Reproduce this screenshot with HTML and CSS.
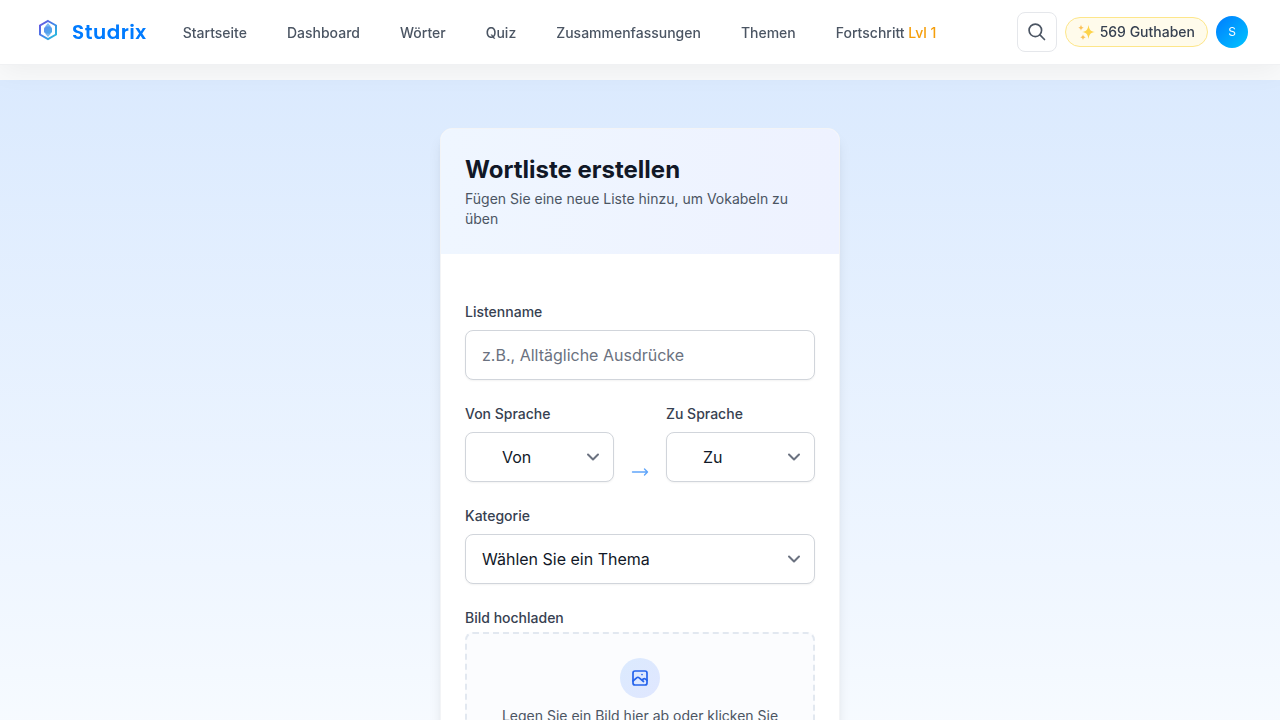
FILE: index.html
```html
<!DOCTYPE html>
<html lang="de">
<head>
    <meta charset="UTF-8">
    <meta name="viewport" content="width=device-width, initial-scale=1">
    <title>Wortliste erstellen</title>
    <link rel="stylesheet" href="styles.css">
</head>
<body>
    <header class="navbar">
        <a href="#" class="logo">
            <svg class="logo-icon" viewBox="0 0 32 32" fill="none">
                <defs>
                    <linearGradient id="logoStroke" x1="0" y1="0" x2="1" y2="1">
                        <stop offset="0" stop-color="#6a4fe0"/>
                        <stop offset="0.5" stop-color="#4285e8"/>
                        <stop offset="1" stop-color="#22c5dc"/>
                    </linearGradient>
                    <linearGradient id="logoFill" x1="0" y1="0" x2="1" y2="1">
                        <stop offset="0" stop-color="#5c8cf0"/>
                        <stop offset="1" stop-color="#4cb0e8"/>
                    </linearGradient>
                </defs>
                <path d="M16 7l8 4.500v9l-8 4.500-8-4.500v-9z" stroke="url(#logoStroke)" stroke-width="2"/>
                <path d="M16 9l3 3.500h-6zM16 23l3-3.500h-6z" fill="#7db9f2"/>
                <rect x="12" y="13" width="8" height="6" rx="1.500" fill="url(#logoFill)"/>
                <path d="M13.500 12.500h5M13.500 19.500h5" stroke="#62a8ee"/>
            </svg>
            <span class="logo-text">Studrix</span>
        </a>
        <nav class="nav-links">
            <a href="#">Startseite</a>
            <a href="#">Dashboard</a>
            <a href="#">Wörter</a>
            <a href="#">Quiz</a>
            <a href="#">Zusammenfassungen</a>
            <a href="#">Themen</a>
            <a href="#">Fortschritt <span class="level">Lvl 1</span></a>
        </nav>
        <div class="nav-actions">
            <button type="button" class="search-btn" aria-label="Suche">
                <svg width="20" height="20" viewBox="0 0 24 24" fill="none" stroke="currentColor" stroke-width="2" stroke-linecap="round">
                    <circle cx="10" cy="10" r="7.500"/>
                    <path d="M15.500 15.500L21 21"/>
                </svg>
            </button>
            <a href="#" class="credits">
                <svg width="18" height="18" viewBox="0 0 18 18">
                    <path d="M10.500 2c.8 4.700 1.800 6.100 6.500 7-4.700.9-5.700 2.300-6.500 7-.8-4.700-1.800-6.100-6.500-7 4.700-.9 5.700-2.300 6.500-7z" fill="#fdd44b"/>
                    <path d="M3 1.500c.4 2.200.8 2.700 2.700 3.200-1.900.5-2.300 1-2.700 3.200-.4-2.200-.8-2.700-2.700-3.200 1.900-.5 2.300-1 2.700-3.200z" fill="#fbc158"/>
                    <path d="M5 11.200c.4 2 .9 2.500 2.700 3-1.800.5-2.300 1-2.700 3-.4-2-.9-2.500-2.700-3 1.800-.5 2.300-1 2.700-3z" fill="#fbc158"/>
                </svg>
                569 Guthaben
            </a>
            <button type="button" class="avatar">S</button>
        </div>
    </header>

    <main class="page">
        <form class="card">
            <div class="card-header">
                <h1>Wortliste erstellen</h1>
                <p>Fügen Sie eine neue Liste hinzu, um Vokabeln zu üben</p>
            </div>
            <div class="card-body">
                <div class="field">
                    <label for="listName">Listenname</label>
                    <input type="text" id="listName" class="control" placeholder="z.B., Alltägliche Ausdrücke">
                </div>

                <div class="languages">
                    <div class="field">
                        <label for="fromLang">Von Sprache</label>
                        <div class="select-wrap">
                            <select id="fromLang" class="control control-flag">
                                <option>Von</option>
                            </select>
                            <svg class="chevron" viewBox="0 0 20 20"><path d="M5 7.500l5 5 5-5"/></svg>
                        </div>
                    </div>
                    <svg class="arrow" width="20" height="20" viewBox="0 0 20 20">
                        <path d="M2.500 10h15M14.500 7l3 3-3 3"/>
                    </svg>
                    <div class="field">
                        <label for="toLang">Zu Sprache</label>
                        <div class="select-wrap">
                            <select id="toLang" class="control control-flag">
                                <option>Zu</option>
                            </select>
                            <svg class="chevron" viewBox="0 0 20 20"><path d="M5 7.500l5 5 5-5"/></svg>
                        </div>
                    </div>
                </div>

                <div class="field">
                    <label for="category">Kategorie</label>
                    <div class="select-wrap">
                        <select id="category" class="control">
                            <option>Wählen Sie ein Thema</option>
                        </select>
                        <svg class="chevron" viewBox="0 0 20 20"><path d="M5 7.500l5 5 5-5"/></svg>
                    </div>
                </div>

                <div class="upload">
                    <span class="upload-label" id="uploadLabel">Bild hochladen</span>
                    <button type="button" class="dropzone" aria-labelledby="uploadLabel">
                        <span class="upload-icon">
                            <svg width="20" height="20" viewBox="0 0 20 20" fill="none" stroke="currentColor" stroke-width="1.700" stroke-linecap="round" stroke-linejoin="round">
                                <rect x="3" y="3" width="14" height="14" rx="2"/>
                                <path d="M3 13l3.600-3.200a1.800 1.800 0 0 1 2.600 0l4.300 3.700M12 12l1.300-1a1.800 1.800 0 0 1 2.200.1l1.500 1.200"/>
                                <path d="M12 6.500h.01"/>
                            </svg>
                        </span>
                        <span>Legen Sie ein Bild hier ab oder klicken Sie</span>
                    </button>
                </div>
            </div>
        </form>
    </main>
</body>
</html>
```
FILE: styles.css
```css
* {
    box-sizing: border-box;
}
body {
    margin: 0;
    padding-top: 80px;
    font-family: Inter, sans-serif;
    font-size: 16px;
    line-height: 24px;
    color: #111827;
    background-color: #f9fafb;
}
a {
    color: inherit;
    text-decoration: none;
}
button, input, select {
    font: inherit;
    color: inherit;
    cursor: pointer;
}

/* Navigation */
.navbar {
    position: fixed;
    top: 0;
    left: 0;
    right: 0;
    z-index: 10;
    display: flex;
    align-items: center;
    height: 65px;
    padding: 0 32px;
    background-color: white;
    border-bottom: 1px solid #f0f1f3;
    box-shadow: 0 4px 30px rgba(0,0,0,0.06);
}
.logo {
    display: flex;
    align-items: center;
    gap: 8px;
    margin-right: 36px;
}
.logo-icon {
    width: 32px;
    height: 32px;
    margin-bottom: 4px;
}
.logo-text {
    font-family: Poppins, Inter, sans-serif;
    font-size: 20px;
    font-weight: 600;
    letter-spacing: 0.5px;
    color: #007bff;
}
.nav-links {
    display: flex;
    gap: 40px;
    padding-top: 2px;
    font-size: 14px;
    font-weight: 500;
    color: #4b5563;
    white-space: nowrap;
}
.level {
    color: #f59e0b;
}
.nav-actions {
    display: flex;
    align-items: center;
    gap: 8px;
    margin-left: auto;
}
.search-btn {
    display: flex;
    align-items: center;
    justify-content: center;
    width: 40px;
    height: 40px;
    padding: 0;
    color: #4b5563;
    background-color: white;
    border: 1px solid #e5e7eb;
    border-radius: 8px;
}
.credits {
    display: flex;
    align-items: center;
    gap: 4px;
    height: 30px;
    padding: 0 12px;
    font-size: 14px;
    font-weight: 500;
    color: #374151;
    white-space: nowrap;
    background-color: #fffbeb;
    border: 1px solid #fde68a;
    border-radius: 15px;
}
.avatar {
    width: 32px;
    height: 32px;
    padding: 0;
    font-size: 12px;
    color: white;
    background: linear-gradient(135deg, #007bff, #00c6ff);
    border: none;
    border-radius: 50%;
}

/* Form card */
.page {
    padding: 48px 16px 0;
    background: linear-gradient(#dbeafe, #eff6ff 70%, #f9fcff);
}
.card {
    max-width: 400px;
    margin: 0 auto;
    overflow: hidden;
    background-color: white;
    border: 1px solid #f3f4f6;
    border-radius: 12px 12px 0 0;
    box-shadow: 0 10px 15px -3px rgba(0,0,0,0.1), 0 4px 6px -4px rgba(0,0,0,0.1);
}
.card-header {
    padding: 25px 24px;
    background: linear-gradient(to right, #eff6ff, #eef2ff);
}
h1 {
    margin: 0 0 3px;
    font-size: 24px;
    line-height: 32px;
    font-weight: 700;
}
.card-header p {
    margin: 0;
    font-size: 14px;
    line-height: 20px;
    color: #4b5563;
}
.card-body {
    display: flex;
    flex-direction: column;
    gap: 24px;
    padding: 48px 24px 24px;
}
label, .upload-label {
    display: block;
    margin-bottom: 8px;
    font-size: 14px;
    line-height: 20px;
    font-weight: 500;
    color: #374151;
}
.control {
    display: block;
    width: 100%;
    height: 50px;
    padding: 0 16px;
    background-color: white;
    border: 1px solid #d1d5db;
    border-radius: 8px;
    box-shadow: 0 1px 2px rgba(0,0,0,0.05);
    appearance: none;
}
.control::placeholder {
    color: #6b7280;
}
.control-flag {
    padding-left: 36px;
}
.select-wrap {
    position: relative;
}
.chevron {
    position: absolute;
    top: 15px;
    right: 11px;
    width: 20px;
    height: 20px;
    fill: none;
    stroke: #6b7280;
    stroke-width: 2;
    stroke-linecap: round;
    stroke-linejoin: round;
    pointer-events: none;
}
.languages {
    display: grid;
    grid-template-columns: 1fr 20px 1fr;
    gap: 16px;
    align-items: end;
}
.arrow {
    fill: none;
    stroke: #60a5fa;
    stroke-width: 1.4;
    stroke-linecap: round;
    stroke-linejoin: round;
}
.upload-label {
    margin-bottom: 4px;
}
.dropzone {
    display: flex;
    flex-direction: column;
    align-items: center;
    gap: 8px;
    width: 100%;
    padding: 24px;
    font-size: 14px;
    line-height: 20px;
    color: #4b5563;
    background-color: #fbfcfe;
    border: 2px dashed #e2e8f0;
    border-radius: 8px;
}
.upload-icon {
    display: flex;
    align-items: center;
    justify-content: center;
    width: 40px;
    height: 40px;
    color: #2563eb;
    background: linear-gradient(135deg, #dbeafe, #e0e7ff);
    border-radius: 50%;
}
```
